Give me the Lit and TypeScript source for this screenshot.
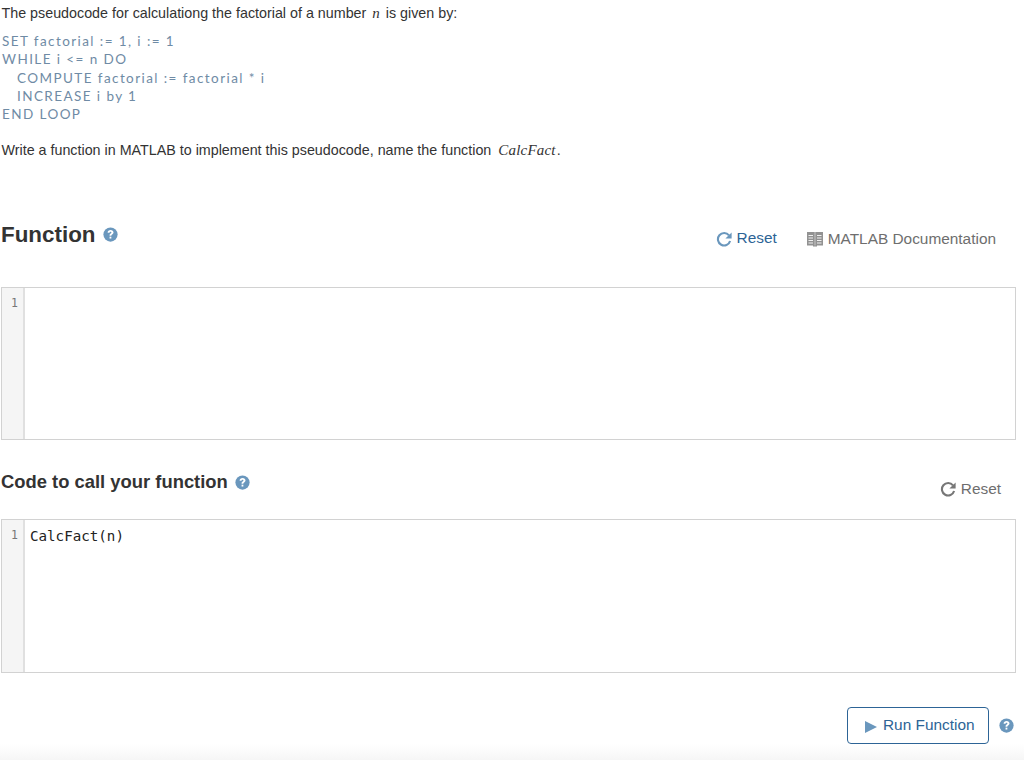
import { LitElement, css, html } from 'lit'
import { customElement, property } from 'lit/decorators.js'

const helpIcon = html`<svg class="help" viewBox="0 0 16 16" width="15" height="15">
  <circle cx="8" cy="8" r="7.6" fill="#6a97bd"></circle>
  <path d="M4.900 6.100c0-1.800 1.400-2.900 3.200-2.900s3.100 1 3.100 2.500c0 1.100-.6 1.700-1.400 2.200-.6.400-.9.700-.9 1.300H7c0-1.100.4-1.700 1.100-2.200.6-.4.900-.7.900-1.100 0-.5-.4-.8-.9-.8-.6 0-1.100.4-1.100 1z" fill="#fff"></path>
  <rect x="7" y="10.300" width="1.900" height="2" fill="#fff"></rect>
</svg>`

const resetIcon = html`<svg class="reset-icon" viewBox="0 0 16 16" width="16" height="16">
  <path d="M13 4.400A6.200 6.200 0 1 0 14.100 10" fill="none" stroke="currentColor" stroke-width="2.100"></path>
  <path d="M15.600 1.400v6.200H9.400z" fill="currentColor"></path>
</svg>`

const bookIcon = html`<svg viewBox="0 0 16 16" width="16" height="16">
  <path d="M0 1h16v13.500H0zM6 14h4v1.500H6z" fill="#929292"></path>
  <path d="M8 1v13.500" stroke="#c4c4c4" stroke-width="1"></path>
  <path d="M1.500 4.500h4.500M1.500 7h4.500M1.500 9.500h4.500M1.500 12h4.500M10 4.500h4.500M10 7h4.500M10 9.500h4.500M10 12h4.500" stroke="#f0f0f0" stroke-width="1"></path>
</svg>`

const pseudocode = [
  { text: 'SET factorial := 1, i := 1', indent: false },
  { text: 'WHILE i <= n DO', indent: false },
  { text: 'COMPUTE factorial := factorial * i', indent: true },
  { text: 'INCREASE i by 1', indent: true },
  { text: 'END LOOP', indent: false },
]

@customElement('code-editor')
export class CodeEditor extends LitElement {
  @property({ type: String })
  code = ''

  static styles = css`
    :host {
      display: flex;
      box-sizing: border-box;
      margin-left: 1px;
      width: 1015px;
      border: 1px solid #d2d2d2;
      height: 154px;
    }
    .gutter {
      width: 21px;
      flex: none;
      background: #f5f5f5;
      border-right: 2px solid #e0e0e0;
      text-align: right;
      color: #777;
      font: 11.5px/17px 'DejaVu Sans Mono', monospace;
      padding-top: 7px;
    }
    .gutter span {
      display: block;
      padding-right: 5px;
    }
    .lines {
      flex: 1;
      padding: 7px 0 0 5px;
      color: #222;
      font: 14.2px/19px 'DejaVu Sans Mono', monospace;
    }
  `

  render() {
    return html`
      <div class="gutter"><span>1</span></div>
      <div class="lines">${this.code}</div>
    `
  }
}

@customElement('app-root')
export class AppRoot extends LitElement {
  static styles = css`
    :host {
      display: block;
      height: 760px;
      overflow: hidden;
      background: linear-gradient(to bottom, #fff 744px, #f6f6f6 760px);
      font-family: 'Liberation Sans', Arial, sans-serif;
      color: #333;
    }
    .intro {
      margin: 0;
      padding: 5px 0 0 1.5px;
      font-size: 14.3px;
      line-height: 17px;
      height: 20px;
    }
    .intro.second {
      padding-top: 0;
      height: 17px;
    }
    i {
      font-family: 'Liberation Serif', serif;
      font-size: 15px;
      margin: 0 2px;
    }
    i.name {
      margin: 0 1px 0 3px;
      letter-spacing: 0.2px;
    }
    .pseudo {
      margin: 7px 0 17px;
      padding-left: 2px;
      height: 93px;
      font: 13.5px/18.3px Lato, sans-serif;
      letter-spacing: 1.42px;
      color: #6f8ba5;
    }
    .pseudo div {
      height: 18.3px;
      white-space: nowrap;
    }
    .pseudo .indent {
      padding-left: 15px;
    }
    .head {
      display: flex;
      align-items: center;
      padding-left: 1px;
    }
    .head.main {
      margin-top: 60px;
      height: 30px;
    }
    .head.sub {
      margin-top: 29px;
      height: 26px;
    }
    h2 {
      margin: 2px 0 0;
      font-size: 22.4px;
      line-height: 30px;
      font-weight: 700;
    }
    h3 {
      margin: 0;
      font-size: 18.4px;
      line-height: 26px;
      font-weight: 700;
    }
    .help {
      display: block;
      margin-left: 7px;
    }
    .actions {
      margin-left: auto;
      display: flex;
      align-items: center;
      font-size: 15.4px;
    }
    .link {
      display: flex;
      align-items: center;
      gap: 5px;
    }
    .link.blue {
      color: #2d6496;
      margin-top: -2px;
    }
    .link.blue .reset-icon {
      color: #6a97bd;
      margin-top: 2px;
    }
    .link.gray {
      color: #6e6e6e;
    }
    .link.gray .reset-icon {
      color: #777;
    }
    .doc {
      margin-left: 30px;
      margin-right: 28px;
    }
    .sub .actions {
      margin-right: 23px;
      padding-top: 14px;
    }
    .main .actions {
      padding-top: 10px;
    }
    .gap-main {
      height: 38px;
    }
    .gap-sub {
      height: 24px;
    }
    .first-editor {
      height: 153px;
    }
    .footer {
      display: flex;
      justify-content: flex-end;
      align-items: center;
      margin-top: 34px;
      padding-right: 10px;
    }
    button {
      display: flex;
      align-items: center;
      gap: 6px;
      box-sizing: border-box;
      width: 142px;
      height: 37px;
      padding: 0 0 0 17px;
      background: #fff;
      border: 1px solid #2d6496;
      border-radius: 4px;
      color: #2d6496;
      font: 15.4px 'Liberation Sans', Arial, sans-serif;
    }
    button .label {
      margin-top: -2px;
    }
    .play {
      width: 0;
      height: 0;
      margin-top: 2px;
      border-left: 12px solid #6a97bd;
      border-top: 6.5px solid transparent;
      border-bottom: 6.5px solid transparent;
    }
    .footer .help {
      margin-left: 10px;
    }
  `

  render() {
    return html`
      <p class="intro">The pseudocode for calculationg the factorial of a number <i>n</i> is given by:</p>
      <div class="pseudo">
        ${pseudocode.map((line) => html`<div class=${line.indent ? 'indent' : ''}>${line.text}</div>`)}
      </div>
      <p class="intro second">Write a function in MATLAB to implement this pseudocode, name the function <i class="name">CalcFact</i>.</p>

      <div class="head main">
        <h2>Function</h2>
        ${helpIcon}
        <div class="actions">
          <span class="link blue">${resetIcon}Reset</span>
          <span class="link gray doc">${bookIcon}MATLAB Documentation</span>
        </div>
      </div>
      <div class="gap-main"></div>
      <code-editor class="first-editor"></code-editor>

      <div class="head sub">
        <h3>Code to call your function</h3>
        ${helpIcon}
        <div class="actions">
          <span class="link gray">${resetIcon}Reset</span>
        </div>
      </div>
      <div class="gap-sub"></div>
      <code-editor code="CalcFact(n)"></code-editor>

      <div class="footer">
        <button><span class="play"></span><span class="label">Run Function</span></button>
        ${helpIcon}
      </div>
    `
  }
}
